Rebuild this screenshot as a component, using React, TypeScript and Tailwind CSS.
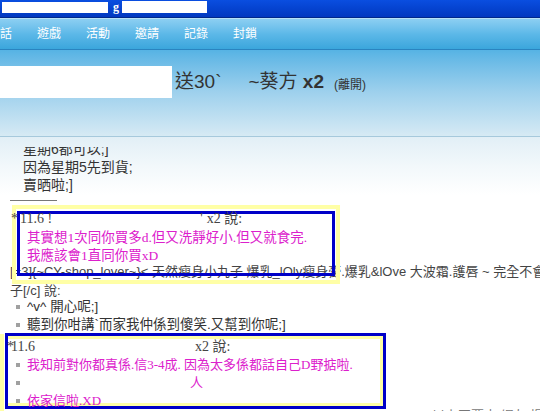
import React from 'react';

const cjkSans = { fontFamily: '"Liberation Sans", "Noto Sans CJK TC", sans-serif' };
const cjkSerif = { fontFamily: '"Liberation Serif", "Noto Sans CJK TC", serif' };

const navItems = ['對話', '遊戲', '活動', '邀請', '記錄', '封鎖'];

const Bullet: React.FC<{ children?: React.ReactNode; pink?: boolean }> = ({ children, pink }) => (
  <div className="flex items-center h-[18px] whitespace-nowrap">
    <span className="ml-[16px] w-[4px] h-[4px] bg-[#a0a0a0] shrink-0" />
    <span className={`ml-[7px] ${pink ? 'text-[#dc20cc]' : 'text-[#333]'}`}>{children}</span>
  </div>
);

export default function App() {
  return (
    <div className="w-[540px] h-[411px] overflow-hidden bg-white relative" style={cjkSans}>
      {/* title bar */}
      <div className="h-[18px] bg-gradient-to-b from-[#0a4ee0] to-[#0238c0] border-b border-[#00288a] flex items-start pt-[1px]">
        <div className="ml-[2px] mt-[1px] w-[106px] h-[11px] bg-white" />
        <span className="ml-[5px] text-[12px] leading-[12px] font-bold text-white" style={cjkSerif}>g</span>
        <div className="ml-[3px] w-[85px] h-[12px] bg-white" />
      </div>

      {/* nav */}
      <div className="h-[32px] bg-gradient-to-b from-[#8ccff2] via-[#5cb8e8] to-[#3aa6dc] border-t border-[#b8e2f8] border-b border-b-[#2a84c0] flex items-center">
        <div className="flex gap-[25px] -ml-[12px] text-[12px] text-white">
          {navItems.map(n => (
            <span key={n} className="w-[24px] whitespace-nowrap">{n}</span>
          ))}
        </div>
      </div>

      {/* header */}
      <div className="h-[87px] bg-gradient-to-b from-[#56b3e4] via-[#9fd1ed] to-[#d6eaf4] border-b border-[#a6c9dc] pt-[16px]">
        <div className="flex items-center h-[32px] whitespace-nowrap text-[#333]">
          <div className="w-[172px] h-[32px] bg-white" />
          <span className="ml-[3px] text-[19px]">送30`</span>
          <span className="ml-[27px] text-[19px]">~葵方 <b>x2</b></span>
          <span className="ml-[10px] mt-[6px] text-[12px]">(離開)</span>
        </div>
      </div>

      {/* content */}
      <div className="bg-gradient-to-b from-[#e2eff6] via-[#f2f8fb] to-white pt-[10px]">
        <div className="h-[48px] overflow-hidden">
          <div className="-mt-[7px] pl-[23px] text-[14px] leading-[18px] text-[#333] whitespace-nowrap">
            <div>星期6都可以;]</div>
            <div>因為星期5先到貨;</div>
            <div>賣晒啦;]</div>
          </div>
        </div>
      </div>

      <div className="ml-[10px] mt-[5px] w-[47px] border-t border-[#777]" />

      {/* first quote */}
      <div className="relative z-10 ml-[12px] mt-[4px] w-[328px] border-[4px] border-[#ffffa6] pt-[2px] px-[1px] pb-[4px]">
        <div className="h-[65px] border-[3px] border-[#0000c8] text-[13.5px]">
          <div className="-mt-[5px] h-[18px] flex items-center whitespace-nowrap text-[#444] text-[14px]" style={cjkSerif}>
            <span className="-ml-[9px] w-[9px]">*</span>
            <span>11.6 !</span>
            <span className="ml-[148px]">'</span>
            <span className="ml-[4px]">x2 說:</span>
          </div>
          <div className="mt-[2px] pl-[7px] leading-[18px] text-[#dc20cc] whitespace-nowrap" style={cjkSerif}>
            <div>其實想1次同你買多d.但又洗靜好小.但又就食完.</div>
            <div>我應該會1直同你買xD</div>
          </div>
        </div>
      </div>

      <div className="-mt-[21px] pl-[10px] text-[13px] leading-[18px] text-[#444] whitespace-nowrap">
        [=3]{'{'}~CY-shop_lover~{'}'}&lt; 天然瘦身小丸子.爆乳_lOly瘦身膏.爆乳&amp;lOve 大波霜.護唇 ~ 完全不會
      </div>
      <div className="mt-[1px] pl-[10px] text-[13px] leading-[18px] text-[#444] whitespace-nowrap">子[/c] 說:</div>
      <div className="-mt-[2px] text-[13.5px]">
        <Bullet>^v^ 開心呢;]</Bullet>
        <Bullet>聽到你咁講`而家我仲係到傻笑.又幫到你呢;]</Bullet>
      </div>

      {/* second quote */}
      <div className="mt-[-1px] flex">
        <div className="mt-[1px] w-[4px] h-[77px] bg-[#ffffa6]" />
        <div className="ml-[1px] w-[381px] h-[76px] border-[3px] border-[#0000c8]">
          <div className="h-full border-t-[3px] border-r-[3px] border-b-[3px] border-[#ffffa6] text-[13px]">
            <div className="-mt-[2px] h-[18px] flex items-center whitespace-nowrap text-[#444] text-[14px]" style={cjkSerif}>
              <span className="-ml-[1px] w-[4px]">*</span>
              <span>11.6</span>
              <span className="ml-[160px]">x2 說:</span>
            </div>
            <div className="mt-[1px] -ml-[8px] leading-[18px]" style={cjkSerif}>
              <Bullet pink>我知前對你都真係.信3-4成. 因為太多係都話自己D野掂啦.</Bullet>
              <div className="flex items-center h-[18px] whitespace-nowrap">
                <span className="ml-[16px] w-[4px] h-[4px] bg-[#a0a0a0] shrink-0" />
                <span className="ml-[170px] text-[#dc20cc]">人</span>
              </div>
              <Bullet pink>依家信啦.XD</Bullet>
            </div>
          </div>
        </div>
      </div>

      <div className="-mt-[4px] pl-[432px] text-[13px] leading-[18px] text-[#777] whitespace-nowrap">以上回覆由 網友 提供</div>
    </div>
  );
}
